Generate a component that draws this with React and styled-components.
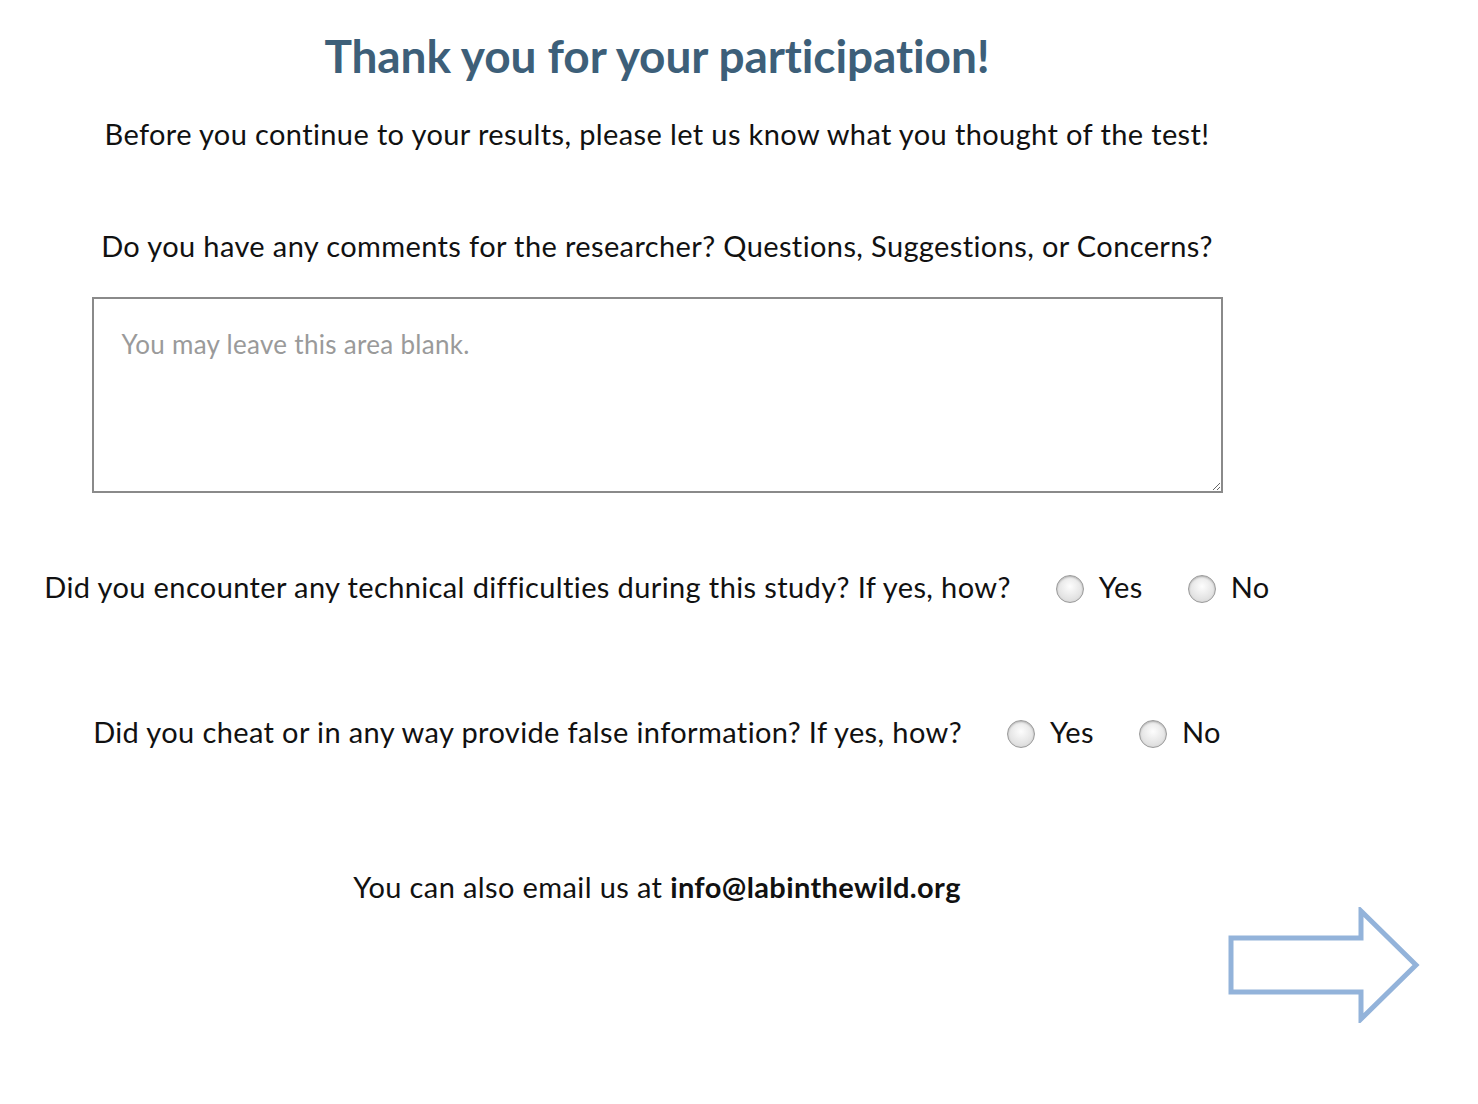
import React from 'react';
import styled, { createGlobalStyle } from 'styled-components';

const Global = createGlobalStyle`
  body {
    margin: 0;
    background: #fff;
    font-family: Lato, "Open Sans", sans-serif;
    font-variant-ligatures: none;
    color: #111;
  }
`;

const Page = styled.div`
  width: 1478px;
  min-height: 1104px;
  box-sizing: border-box;
  padding-top: 26px;
`;

const Column = styled.div`
  width: 1314px;
  display: flex;
  flex-direction: column;
  align-items: center;
`;

const Title = styled.h1`
  margin: 0;
  font-size: 46px;
  font-weight: 700;
  color: #3d5f79;
  letter-spacing: -0.1px;
  line-height: 60px;
`;

const Text = styled.p`
  margin: ${p => p.$top}px 0 0;
  font-size: 29px;
  letter-spacing: 0.38px;
  line-height: 40px;
  b {
    font-weight: 700;
  }
`;

const Comments = styled.textarea`
  margin-top: 31px;
  width: 1131px;
  height: 196px;
  box-sizing: border-box;
  border: 2px solid #8a8a8a;
  padding: 29px 28px;
  font-family: inherit;
  font-size: 26px;
  letter-spacing: 0.3px;
  color: #333;
  resize: vertical;
  outline: none;
  &::placeholder {
    color: #9a9a9a;
  }
`;

const Row = styled.div`
  margin-top: ${p => p.$top}px;
  display: flex;
  align-items: center;
  font-size: 29px;
  letter-spacing: 0.38px;
  line-height: 40px;
`;

const Choice = styled.label`
  display: flex;
  align-items: center;
  gap: 15px;
  margin-left: 45px;
`;

const Radio = styled.input.attrs({ type: 'radio' })`
  appearance: none;
  margin: 4px 0 0;
  width: 28px;
  height: 28px;
  border-radius: 50%;
  border: 1px solid #9b9b9b;
  background: radial-gradient(circle at 50% 40%, #fdfdfd 0%, #e4e4e4 60%, #cfcfcf 100%);
  box-shadow: inset 0 1px 2px rgba(0, 0, 0, 0.25);
  &:checked {
    background: radial-gradient(circle, #2f6fd6 0 30%, #cfe0fb 32% 100%);
  }
`;

const Footer = styled.div`
  display: flex;
  justify-content: flex-end;
  padding-right: 57px;
  margin-top: 0;
`;

const NextButton = styled.button`
  border: 0;
  background: none;
  padding: 0;
  cursor: pointer;
`;

function YesNo({ name }) {
  return (
    <>
      <Choice>
        <Radio name={name} value="yes" />
        Yes
      </Choice>
      <Choice>
        <Radio name={name} value="no" />
        No
      </Choice>
    </>
  );
}

export default function App() {
  return (
    <Page>
      <Global />
      <Column>
        <Title>Thank you for your participation!</Title>
        <Text $top={28}>Before you continue to your results, please let us know what you thought of the test!</Text>
        <Text $top={72}>Do you have any comments for the researcher? Questions, Suggestions, or Concerns?</Text>
        <Comments placeholder="You may leave this area blank." />
        <Row $top={74}>
          Did you encounter any technical difficulties during this study? If yes, how?
          <YesNo name="tech" />
        </Row>
        <Row $top={105}>
          Did you cheat or in any way provide false information? If yes, how?
          <YesNo name="cheat" />
        </Row>
        <Text $top={115}>
          You can also email us at <b>info@labinthewild.org</b>
        </Text>
      </Column>
      <Footer>
        <NextButton aria-label="Continue">
          <svg width="194" height="116" viewBox="0 0 194 116">
            <path
              d="M4 31 H134 V4 L189 58 L134 112 V85 H4 Z"
              fill="none"
              stroke="#93b3da"
              strokeWidth="5"
            />
          </svg>
        </NextButton>
      </Footer>
    </Page>
  );
}
